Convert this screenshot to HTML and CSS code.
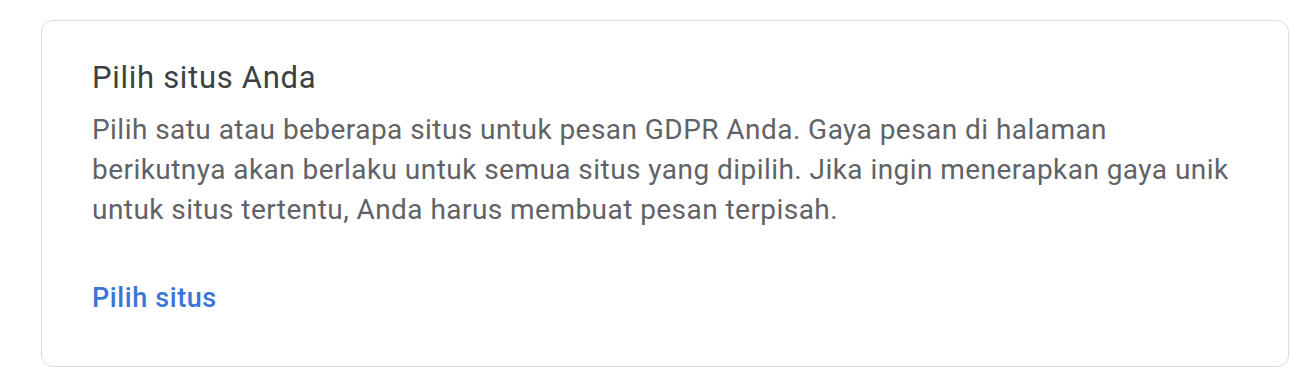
FILE: index.html
```html
<!DOCTYPE html>
<html lang="id">
<head>
<meta charset="utf-8">
<link rel="stylesheet" href="styles.css">
</head>
<body>
<div class="page">
  <section class="card">
    <h2 class="card-title">Pilih situs Anda</h2>
    <p class="card-text">Pilih satu atau beberapa situs untuk pesan GDPR Anda. Gaya pesan di halaman berikutnya akan berlaku untuk semua situs yang dipilih. Jika ingin menerapkan gaya unik untuk situs tertentu, Anda harus membuat pesan terpisah.</p>
    <a class="card-link" href="#">Pilih situs</a>
  </section>
</div>
</body>
</html>
```
FILE: styles.css
```css
html, body {
  margin: 0;
  padding: 0;
  background: #ffffff;
}
.page {
  padding: 20px 18px 0 41px;
}
.card {
  box-sizing: border-box;
  width: 1248px;
  height: 347px;
  border: 1px solid #dadce0;
  border-radius: 12px;
  padding: 39px 50px 0 50px;
  display: flex;
  flex-direction: column;
  align-items: flex-start;
}
.card-title {
  margin: 0;
  font-family: Roboto, "Liberation Sans", sans-serif;
  font-weight: 400;
  font-size: 31px;
  line-height: 36px;
  letter-spacing: 0.7px;
  color: #3c4043;
}
.card-text {
  margin: 14px 0 0 0;
  max-width: 1140px;
  font-family: Roboto, "Liberation Sans", sans-serif;
  font-size: 28px;
  line-height: 40px;
  letter-spacing: 0.45px;
  color: #5f6368;
}
.card-link {
  margin-top: 52px;
  font-family: Roboto, "Liberation Sans", sans-serif;
  font-weight: 500;
  font-size: 27px;
  line-height: 32px;
  letter-spacing: 0.6px;
  color: #3a76d8;
  text-decoration: none;
}
```
